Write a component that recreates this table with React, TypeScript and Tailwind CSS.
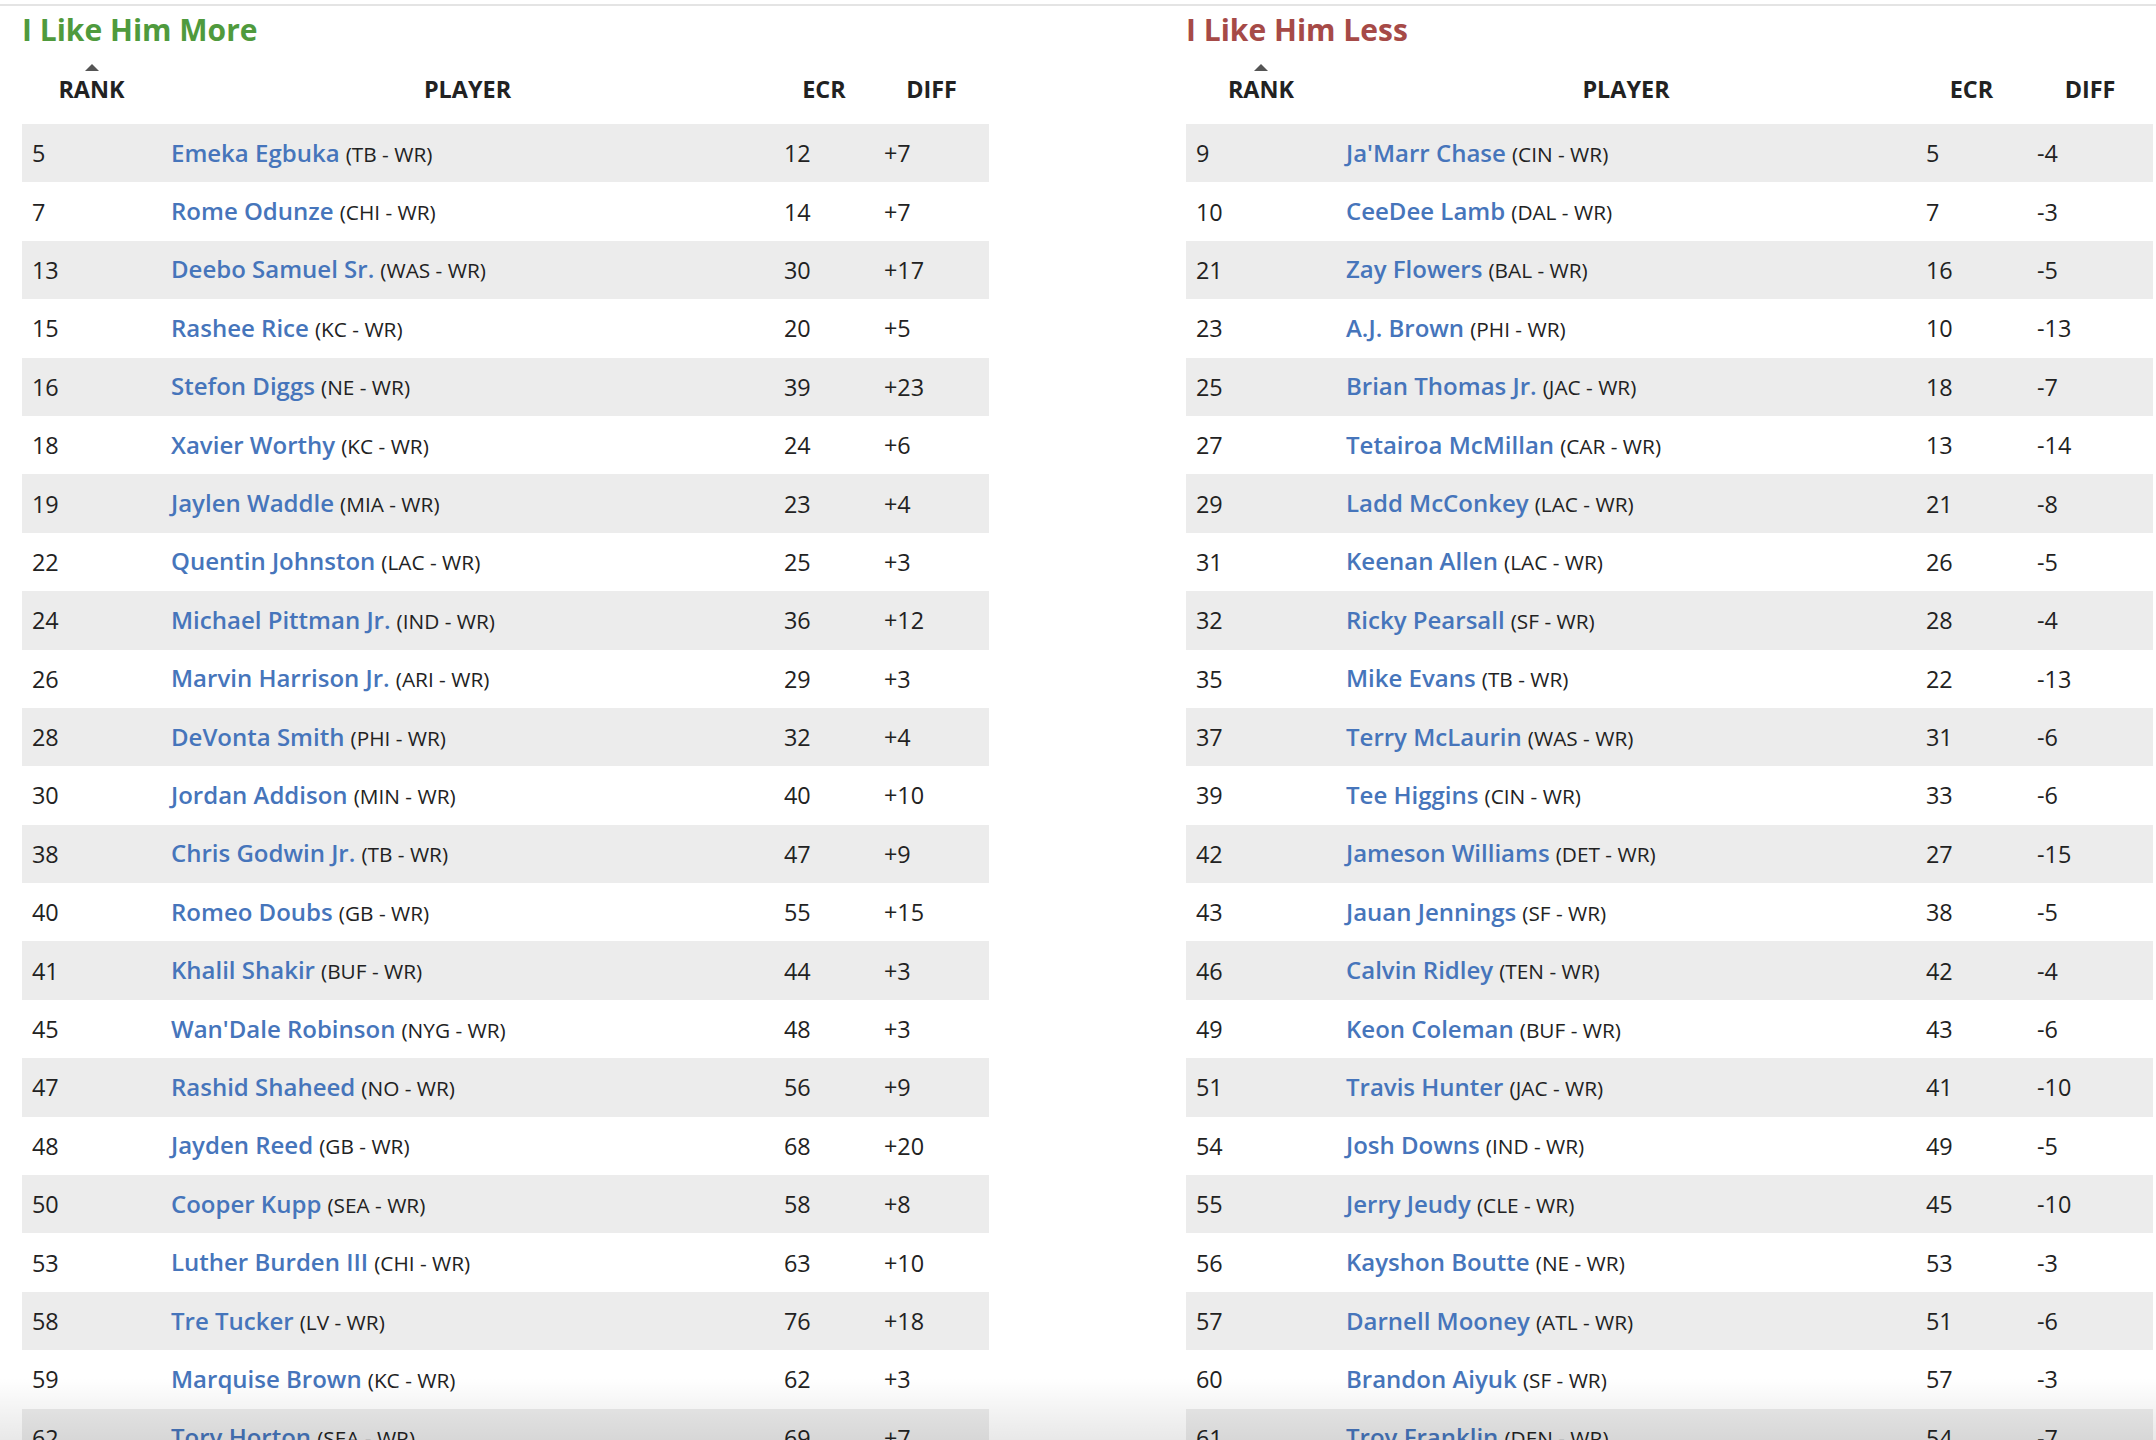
type Row = [number, string, string, number, string];

const moreRows: Row[] = [
  [5, 'Emeka Egbuka', 'TB - WR', 12, '+7'],
  [7, 'Rome Odunze', 'CHI - WR', 14, '+7'],
  [13, 'Deebo Samuel Sr.', 'WAS - WR', 30, '+17'],
  [15, 'Rashee Rice', 'KC - WR', 20, '+5'],
  [16, 'Stefon Diggs', 'NE - WR', 39, '+23'],
  [18, 'Xavier Worthy', 'KC - WR', 24, '+6'],
  [19, 'Jaylen Waddle', 'MIA - WR', 23, '+4'],
  [22, 'Quentin Johnston', 'LAC - WR', 25, '+3'],
  [24, 'Michael Pittman Jr.', 'IND - WR', 36, '+12'],
  [26, 'Marvin Harrison Jr.', 'ARI - WR', 29, '+3'],
  [28, 'DeVonta Smith', 'PHI - WR', 32, '+4'],
  [30, 'Jordan Addison', 'MIN - WR', 40, '+10'],
  [38, 'Chris Godwin Jr.', 'TB - WR', 47, '+9'],
  [40, 'Romeo Doubs', 'GB - WR', 55, '+15'],
  [41, 'Khalil Shakir', 'BUF - WR', 44, '+3'],
  [45, "Wan'Dale Robinson", 'NYG - WR', 48, '+3'],
  [47, 'Rashid Shaheed', 'NO - WR', 56, '+9'],
  [48, 'Jayden Reed', 'GB - WR', 68, '+20'],
  [50, 'Cooper Kupp', 'SEA - WR', 58, '+8'],
  [53, 'Luther Burden III', 'CHI - WR', 63, '+10'],
  [58, 'Tre Tucker', 'LV - WR', 76, '+18'],
  [59, 'Marquise Brown', 'KC - WR', 62, '+3'],
  [62, 'Tory Horton', 'SEA - WR', 69, '+7'],
];

const lessRows: Row[] = [
  [9, "Ja'Marr Chase", 'CIN - WR', 5, '-4'],
  [10, 'CeeDee Lamb', 'DAL - WR', 7, '-3'],
  [21, 'Zay Flowers', 'BAL - WR', 16, '-5'],
  [23, 'A.J. Brown', 'PHI - WR', 10, '-13'],
  [25, 'Brian Thomas Jr.', 'JAC - WR', 18, '-7'],
  [27, 'Tetairoa McMillan', 'CAR - WR', 13, '-14'],
  [29, 'Ladd McConkey', 'LAC - WR', 21, '-8'],
  [31, 'Keenan Allen', 'LAC - WR', 26, '-5'],
  [32, 'Ricky Pearsall', 'SF - WR', 28, '-4'],
  [35, 'Mike Evans', 'TB - WR', 22, '-13'],
  [37, 'Terry McLaurin', 'WAS - WR', 31, '-6'],
  [39, 'Tee Higgins', 'CIN - WR', 33, '-6'],
  [42, 'Jameson Williams', 'DET - WR', 27, '-15'],
  [43, 'Jauan Jennings', 'SF - WR', 38, '-5'],
  [46, 'Calvin Ridley', 'TEN - WR', 42, '-4'],
  [49, 'Keon Coleman', 'BUF - WR', 43, '-6'],
  [51, 'Travis Hunter', 'JAC - WR', 41, '-10'],
  [54, 'Josh Downs', 'IND - WR', 49, '-5'],
  [55, 'Jerry Jeudy', 'CLE - WR', 45, '-10'],
  [56, 'Kayshon Boutte', 'NE - WR', 53, '-3'],
  [57, 'Darnell Mooney', 'ATL - WR', 51, '-6'],
  [60, 'Brandon Aiyuk', 'SF - WR', 57, '-3'],
  [61, 'Troy Franklin', 'DEN - WR', 54, '-7'],
];

const RankTable = ({
  title,
  titleClass,
  cols,
  rows,
}: {
  title: string;
  titleClass: string;
  cols: string;
  rows: Row[];
}) => {
  return (
    <div className="w-[967px] shrink-0">
      {/* Title */}
      <div className={`h-[44px] pt-[5px] text-[30px] leading-[38px] font-bold ${titleClass}`}>{title}</div>

      {/* Header */}
      <div className={`grid ${cols} h-[74px] text-[23.4px] leading-[32px] font-bold text-[#222]`}>
        <div className="flex flex-col items-center justify-end pb-[19px]">
          <span className="mb-[2px] w-0 h-0 border-x-[7px] border-x-transparent border-b-[7px] border-b-[#555]" />
          <span>RANK</span>
        </div>
        <div className="flex flex-col items-center justify-end pb-[19px]">PLAYER</div>
        <div className="flex flex-col items-center justify-end pb-[19px]">ECR</div>
        <div className="flex flex-col items-center justify-end pb-[19px]">DIFF</div>
      </div>

      {/* Rows */}
      {rows.map(([rank, name, team, ecr, diff], i) => (
        <div
          key={rank}
          className={`grid ${cols} h-[58.4px] items-center text-[23.4px] leading-[32px] text-[#222] ${
            i % 2 === 0 ? 'bg-[#ececec]' : 'bg-white'
          }`}
        >
          <div className="pl-[10px]">{rank}</div>
          <div className="pl-[10px] whitespace-nowrap">
            <a className="text-[24px] font-semibold text-[#4675bb]">{name}</a>{' '}
            <span className="text-[20.8px]">({team})</span>
          </div>
          <div className="pl-[10px]">{ecr}</div>
          <div className="pl-[10px]">{diff}</div>
        </div>
      ))}
    </div>
  );
};

export default function App() {
  return (
    <div className="relative h-[1440px] overflow-hidden bg-white font-['Open_Sans',sans-serif]">
      <div className="mt-[4px] h-[2px] bg-[#e4e4e4]" />
      <div className="flex gap-[197px] pl-[22px]">
        <RankTable
          title="I Like Him More"
          titleClass="text-[#4f9a3d]"
          cols="grid-cols-[139px_613px_100px_115px]"
          rows={moreRows}
        />
        <RankTable
          title="I Like Him Less"
          titleClass="text-[#a64a47]"
          cols="grid-cols-[150px_580px_111px_126px]"
          rows={lessRows}
        />
      </div>
      {/* bottom fade */}
      <div className="pointer-events-none absolute inset-x-0 bottom-0 h-[62px] bg-gradient-to-b from-transparent to-black/[0.09]" />
    </div>
  );
}
